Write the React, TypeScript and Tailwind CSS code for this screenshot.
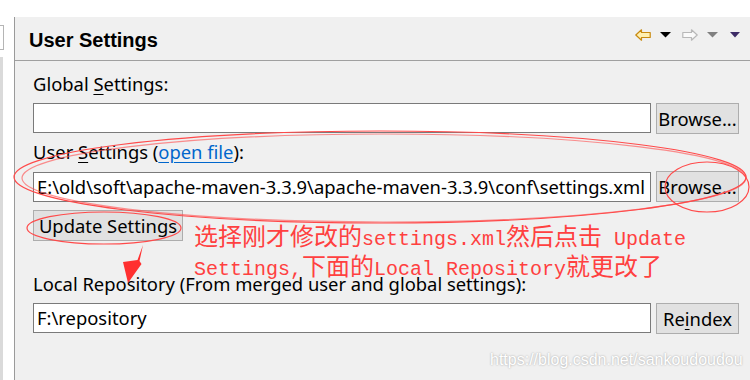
const Field = ({ value }: { value?: string }) => {
  return (
    <div className="flex h-[30px] flex-1 items-center overflow-hidden whitespace-nowrap border border-[#7a7a7a] bg-white pl-[3px] text-black">
      {value}
    </div>
  );
};

const Btn = ({ children, className = "" }: { children: React.ReactNode; className?: string }) => {
  return (
    <div
      className={
        "flex h-[31px] items-center justify-center border border-[#adadad] bg-[#e1e1e1] text-black " +
        className
      }
    >
      {children}
    </div>
  );
};

const Cjk = ({ children }: { children: React.ReactNode }) => (
  <span className="font-['Noto_Sans_CJK_SC',sans-serif] text-[24px] leading-none">{children}</span>
);

const App = () => {
  return (
    <div className="relative h-[380px] w-[750px] overflow-hidden bg-white font-['Noto_Sans',sans-serif] text-[18.4px]">
      {/* top strip */}
      <div className="h-[17px] bg-white" />

      <div className="flex h-[363px]">
        {/* left view, cut off */}
        <div className="flex w-[14px] flex-col bg-white">
          <div className="mt-[8px] h-[25px] w-[4px] border border-l-0 border-[#b5b5b5]" />
          <div className="mt-[7px] w-[3px] flex-1 bg-[#dadada]" />
        </div>
        <div className="w-px bg-[#9a9a9a]" />

        {/* User Settings page */}
        <div className="flex flex-1 flex-col bg-[#f0f0f0]">
          {/* header */}
          <div className="flex h-[44px] items-start border-b border-[#a0a0a0] pl-[14px] pr-[10px]">
            <h1 className="mt-[11px] font-['Liberation_Sans',sans-serif] text-[20px] font-bold leading-[24px] text-black">
              User Settings
            </h1>
            <div className="ml-auto mt-[12px] flex items-center">
              <svg width="16" height="12" viewBox="0 0 16 12">
                <path
                  d="M0.8 6 L6.5 0.8 L6.5 3.5 L15.2 3.5 L15.2 8.5 L6.5 8.5 L6.5 11.2 Z"
                  fill="#fff0b0"
                  stroke="#c88a10"
                  strokeWidth="1.2"
                  strokeLinejoin="round"
                />
              </svg>
              <svg className="ml-[9px]" width="11" height="6" viewBox="0 0 11 6">
                <path d="M0 0 H11 L5.5 5.5 Z" fill="#000" />
              </svg>
              <svg className="ml-[11px]" width="16" height="12" viewBox="0 0 16 12">
                <path
                  d="M15.2 6 L9.5 0.8 L9.5 3.5 L0.8 3.5 L0.8 8.5 L9.5 8.5 L9.5 11.2 Z"
                  fill="#fafafa"
                  stroke="#b8b8b8"
                  strokeWidth="1.2"
                  strokeLinejoin="round"
                />
              </svg>
              <svg className="ml-[9px]" width="11" height="6" viewBox="0 0 11 6">
                <path d="M0 0 H11 L5.5 5.5 Z" fill="#808080" />
              </svg>
              <svg className="ml-[12px]" width="10" height="6" viewBox="0 0 10 6">
                <path d="M0 0 H10 L5 5.5 Z" fill="#3d2c66" />
              </svg>
            </div>
          </div>

          {/* form */}
          <div className="flex flex-col pl-[18px] pr-[11px] leading-[24px]">
            <div className="mt-[11px]">
              Global <span className="underline underline-offset-[3px]">S</span>ettings:
            </div>
            <div className="mt-[7px] flex gap-[5px]">
              <Field />
              <Btn className="w-[83px]">Browse...</Btn>
            </div>

            <div className="mt-[6px]">
              User <span className="underline underline-offset-[3px]">S</span>ettings (
              <span className="text-[#0066cc] underline underline-offset-[3px]">open file</span>):
            </div>
            <div className="mt-[7px] flex items-start gap-[5px]">
              <div className="mt-px flex flex-1">
                <Field value="E:\old\soft\apache-maven-3.3.9\apache-maven-3.3.9\conf\settings.xml" />
              </div>
              <Btn className="w-[83px]">Browse...</Btn>
            </div>

            <div className="mt-[8px] flex">
              <Btn className="w-[150px]">Update Settings</Btn>
            </div>

            <div className="mt-[31px]">Local Repository (From merged user and global settings):</div>
            <div className="mt-[7px] flex gap-[5px]">
              <Field value="F:\repository" />
              <Btn className="w-[83px]">
                Re<span className="underline underline-offset-[3px]">i</span>ndex
              </Btn>
            </div>
          </div>
        </div>
      </div>

      {/* red annotations drawn over the screenshot */}
      <svg
        className="pointer-events-none absolute left-0 top-0"
        width="750"
        height="380"
        viewBox="0 0 750 380"
        fill="none"
        stroke="#ff4a4a"
        strokeWidth="1.2"
      >
        <ellipse cx="380" cy="177" rx="366" ry="46" />
        <ellipse cx="384" cy="178" rx="362" ry="44" opacity="0.6" />
        <ellipse cx="707" cy="187" rx="42" ry="25" />
        <ellipse cx="104" cy="228" rx="77" ry="16" />
        <path
          d="M143 245 L139.5 261 L141.5 264 L128 283 L123 262 L137.5 260 Z"
          fill="#ff3030"
          stroke="none"
        />
      </svg>

      <div className="absolute left-[194px] top-[223px] font-['Liberation_Mono',monospace] text-[20px] leading-[30px] text-[#ff4040]">
        <div className="h-[30px] whitespace-nowrap">
          <Cjk>选择刚才修改的</Cjk>settings.xml<Cjk>然后点击</Cjk> Update
        </div>
        <div className="h-[30px] whitespace-nowrap">
          Settings,<Cjk>下面的</Cjk>Local Repository<Cjk>就更改了</Cjk>
        </div>
      </div>

      {/* watermark */}
      <div className="absolute left-[490px] top-[350px] font-['Liberation_Sans',sans-serif] text-[16px] leading-[20px] text-white [text-shadow:0_0_2px_#9a9a9a]">
        https://blog.csdn.net/sankoudoudou
      </div>
    </div>
  );
};

export default App;
